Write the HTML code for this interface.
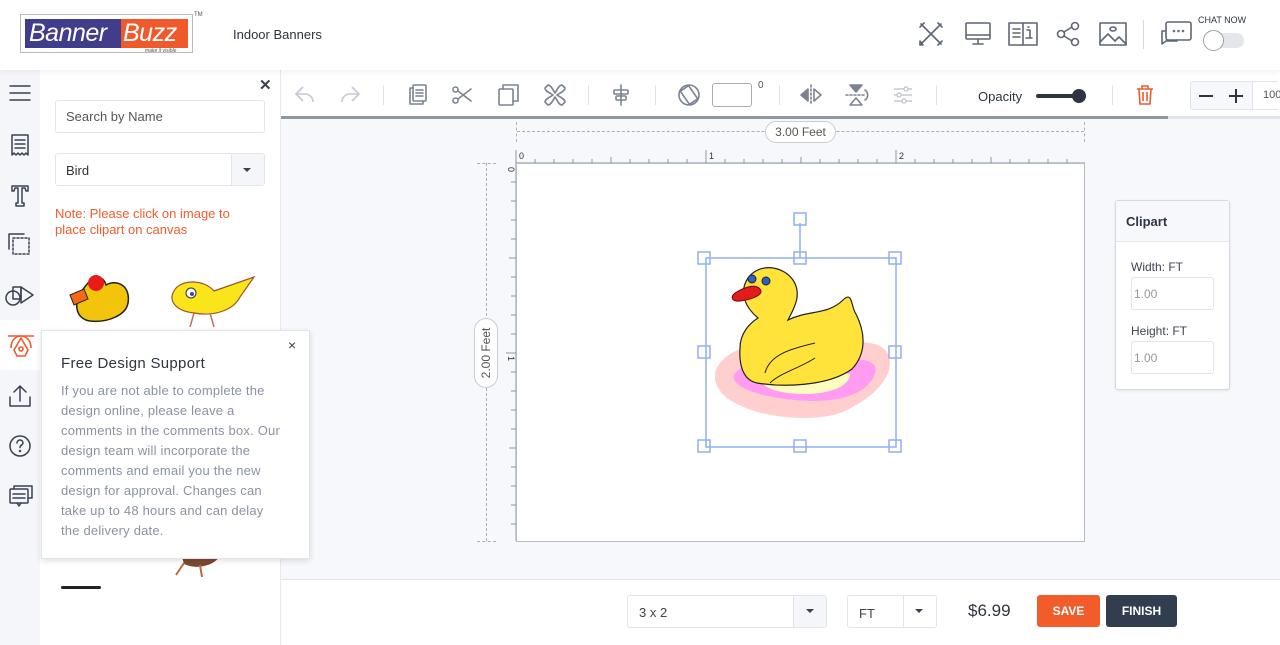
<!DOCTYPE html>
<html><head><meta charset="utf-8"><style>
*{box-sizing:border-box;margin:0;padding:0}
body{width:1280px;height:645px;overflow:hidden;font-family:"Liberation Sans",sans-serif;background:#f7f8fc;position:relative;color:#333}
.abs{position:absolute}
svg{position:absolute;overflow:visible}
.ic{fill:none;stroke:#5f6675;stroke-width:1.6;stroke-linecap:round;stroke-linejoin:round}
.tb{fill:none;stroke:#7b8392;stroke-width:1.6;stroke-linecap:round;stroke-linejoin:round}
.lr{fill:none;stroke:#3a4150;stroke-width:1.5;stroke-linecap:round;stroke-linejoin:round}
</style></head><body>
<!-- header -->
<div class="abs" style="left:0;top:0;width:1280px;height:70px;background:#fff;box-shadow:0 2px 6px rgba(0,0,0,.06);z-index:3">
  <div class="abs" style="left:20px;top:14px;width:173px;height:39px;border:1.5px solid #b9bcc3"></div>
  <div class="abs" style="left:25px;top:19px;width:96px;height:29px;background:#3f3d8c;color:#fff;font-size:25px;font-style:italic;line-height:29px;padding-left:4px;letter-spacing:-0.5px">Banner</div>
  <div class="abs" style="left:121px;top:19px;width:67px;height:29px;background:#ee5a2c;color:#fff;font-size:25px;font-style:italic;line-height:29px;padding-left:2px;letter-spacing:-0.5px">Buzz</div>
  <div class="abs" style="left:145px;top:48px;font-size:5px;color:#555;font-style:italic">make it visible</div>
  <div class="abs" style="left:194px;top:12px;font-size:6px;color:#555">TM</div>
  <div class="abs" style="left:233px;top:27px;font-size:13px;color:#2d3442">Indoor Banners</div>
  <svg style="left:918px;top:21px" width="26" height="26" class="ic"><path d="M3 3l20 20M23 3L3 23M6 2l-4 4M20 2l4 4M2 20l3 4h-3zM24 20l-4 4"/></svg>
  <svg style="left:965px;top:22px" width="26" height="24" class="ic"><rect x="1" y="1" width="24" height="16" rx="1"/><path d="M1 13h24M13 17v4M8 22h10"/></svg>
  <svg style="left:1008px;top:22px" width="30" height="24" class="ic"><rect x="1" y="1" width="28" height="22"/><path d="M15 1v22M5 7h7M5 11h7M5 15h7M19 8h3v8M18 16h6M20 5h1"/></svg>
  <svg style="left:1056px;top:22px" width="24" height="24" class="ic"><circle cx="5" cy="12" r="3.5"/><circle cx="19" cy="4" r="3.5"/><circle cx="19" cy="20" r="3.5"/><path d="M8 10l8-5M8 14l8 5"/></svg>
  <svg style="left:1099px;top:22px" width="28" height="24" class="ic"><rect x="1" y="1" width="26" height="22"/><path d="M1 20l8-8 7 7 4-4 7 7"/><ellipse cx="14" cy="7" rx="3" ry="2"/></svg>
  <div class="abs" style="left:1143px;top:20px;width:1px;height:29px;background:#d6d9df"></div>
  <svg style="left:1160px;top:21px" width="32" height="28" class="ic"><rect x="6" y="1" width="25" height="18" rx="2"/><path d="M6 10H2v13l4-3h11v-1"/><circle cx="14" cy="10" r=".5"/><circle cx="18.5" cy="10" r=".5"/><circle cx="23" cy="10" r=".5"/></svg>
  <div class="abs" style="left:1198px;top:15px;font-size:9px;color:#2d3442">CHAT NOW</div>
  <div class="abs" style="left:1204px;top:33px;width:40px;height:15px;border-radius:8px;background:#e4e6ea"></div>
  <div class="abs" style="left:1203px;top:30px;width:21px;height:21px;border-radius:50%;background:#fff;border:1px solid #9aa0ab"></div>
</div>
<!-- left rail -->
<div class="abs" style="left:0;top:70px;width:40px;height:575px;background:#f5f6fa"></div>
<svg style="left:10px;top:85px" width="20" height="16" class="lr"><path d="M0 1h20M0 8h20M0 15h20"/></svg>
<svg style="left:11px;top:134px" width="18" height="24" class="lr"><path d="M1 1h16v20l-2-2-2 2-2-2-2 2-2-2-2 2-2-2-2 2zM4 6h10M4 10h10M4 14h10"/></svg>
<svg style="left:11px;top:185px" width="18" height="22" class="lr"><path d="M1 1h16v5h-2l-1-3h-3v15h2v3H5v-3h2V3H4L3 6H1z"/></svg>
<svg style="left:8px;top:233px" width="24" height="24" class="lr"><path d="M5 5h16v16H5z" stroke-dasharray="2 2"/><path d="M1 16V1h15"/></svg>
<svg style="left:5px;top:283px" width="30" height="24" class="lr"><circle cx="8" cy="15" r="7"/><rect x="8" y="4" width="8" height="12"/><path d="M16 4l12 8-12 8z"/></svg>
<div class="abs" style="left:0;top:320px;width:40px;height:50px;background:#fff"></div>
<svg style="left:8px;top:332px" width="26" height="26" fill="none" stroke="#ee5a2c" stroke-width="1.6" stroke-linejoin="round"><path d="M0 4h26"/><path d="M3 16C3 8 8 4 13 4s10 4 10 12"/><path d="M13 6l-7 12 3 6h8l3-6z"/><circle cx="13" cy="17" r="2"/></svg>
<svg style="left:9px;top:385px" width="22" height="22" class="lr"><path d="M1 12v9h20v-9M11 16V1M5 7l6-6 6 6"/></svg>
<svg style="left:9px;top:435px" width="22" height="22" class="lr"><circle cx="11" cy="11" r="10"/><path d="M8 8a3 3 0 116 0c0 2-3 2-3 4.5"/><circle cx="11" cy="16" r=".5"/></svg>
<svg style="left:9px;top:485px" width="24" height="22" class="lr"><rect x="1" y="4" width="18" height="14" rx="1"/><path d="M5 4V1h18v12h-4M4 9h12M4 13h12M8 18l2 3 2-3"/></svg>
<!-- panel -->
<div class="abs" style="left:40px;top:70px;width:241px;height:575px;background:#fff;border-right:1px solid #e6e8ee"></div>
<div class="abs" style="left:259px;top:76px;font-size:15px;font-weight:bold;color:#3a4150">✕</div>
<div class="abs" style="left:55px;top:100px;width:210px;height:33px;border:1px solid #e1e4ea;border-radius:3px;font-size:13px;color:#555;padding:8px 10px">Search by Name</div>
<div class="abs" style="left:55px;top:153px;width:210px;height:33px;border:1px solid #e1e4ea;border-radius:3px;font-size:13px;color:#333;padding:9px 10px">Bird</div>
<div class="abs" style="left:231px;top:154px;width:33px;height:31px;background:#f5f6fa;border-left:1px solid #e1e4ea"></div>
<div class="abs" style="left:243px;top:168px;border:4px solid transparent;border-top:4px solid #3a4150;border-bottom:0"></div>
<div class="abs" style="left:55px;top:206px;font-size:13px;color:#f25c2a;line-height:16px">Note: Please click on image to<br>place clipart on canvas</div>
<!-- bird clipart approximations -->
<svg style="left:68px;top:273px" width="80" height="60"><path d="M20 10c5-8 15-8 18 2 10-6 25 0 22 18-2 12-20 20-38 18C8 46 2 30 20 10z" fill="#f2c40c" stroke="#222" stroke-width="1.5"/><circle cx="28" cy="10" r="8" fill="#e81a1a"/><path d="M2 22l14-6 4 10-14 6z" fill="#f46a14" stroke="#222"/></svg>
<svg style="left:164px;top:273px" width="100" height="60"><path d="M10 18c6-12 30-12 40 0l40-14-14 20c-6 12-24 20-46 16C12 38 4 28 10 18z" fill="#f9e51a" stroke="#a0522d" stroke-width="1.2"/><circle cx="27" cy="20" r="5" fill="#fff" stroke="#333"/><circle cx="28" cy="21" r="2" fill="#3a49a8"/><path d="M30 40l-4 14M46 40l4 14" stroke="#c0705a" stroke-width="1.5"/></svg>
<svg style="left:170px;top:545px" width="60" height="35"><path d="M10 5c10-6 30-6 40 6-6 10-24 14-36 8z" fill="#7a4a30"/><path d="M14 18l-8 12M30 20l2 12" stroke="#c06a3a" stroke-width="2"/></svg>
<div class="abs" style="left:61px;top:586px;width:40px;height:3px;background:#222;border-radius:2px"></div>
<!-- popup -->
<div class="abs" style="left:41px;top:330px;width:269px;height:229px;background:#fff;border:1px solid #e1e4ea;box-shadow:0 2px 6px rgba(0,0,0,.12);z-index:4">
  <div class="abs" style="left:246px;top:6px;font-size:14px;color:#3a4150">×</div>
  <div class="abs" style="left:19px;top:24px;font-size:15px;color:#2d3442;letter-spacing:0.3px">Free Design Support</div>
  <div class="abs" style="left:19px;top:50px;width:250px;font-size:13px;line-height:20px;color:#8a92a3;letter-spacing:0.2px;white-space:nowrap">If you are not able to complete the<br>design online, please leave a<br>comments in the comments box. Our<br>design team will incorporate the<br>comments and email you the new<br>design for approval. Changes can<br>take up to 48 hours and can delay<br>the delivery date.</div>
</div>
<!-- toolbar -->
<div class="abs" style="left:281px;top:70px;width:999px;height:46px;background:#fff"></div>
<div class="abs" style="left:281px;top:116px;width:887px;height:3px;background:#8f97a3"></div>
<div class="abs" style="left:1168px;top:116px;width:112px;height:3px;background:#dfe2e8"></div>
<svg style="left:295px;top:85px" width="20" height="20" fill="none" stroke="#c3c8d2" stroke-width="1.6"><path d="M8 2L1 9l7 7M1 9h9a8 8 0 018 8"/></svg>
<svg style="left:340px;top:85px" width="20" height="20" fill="none" stroke="#c3c8d2" stroke-width="1.6"><path d="M12 2l7 7-7 7M19 9h-9a8 8 0 00-8 8"/></svg>
<div class="abs" style="left:383px;top:85px;width:1px;height:20px;background:#dfe2e8"></div>
<svg style="left:408px;top:84px" width="20" height="22" class="tb"><rect x="5" y="1" width="13" height="16" rx="1"/><path d="M5 4H2v16h13v-3M8 6h7M8 9h7M8 12h7"/></svg>
<svg style="left:452px;top:86px" width="20" height="18" class="tb"><circle cx="3.5" cy="3.5" r="2.5"/><circle cx="3.5" cy="14.5" r="2.5"/><path d="M6 5l13 10M6 13L19 3"/></svg>
<svg style="left:498px;top:84px" width="22" height="22" class="tb"><rect x="1" y="5" width="14" height="16" rx="1"/><path d="M5 5V1h15v16h-5"/></svg>
<svg style="left:544px;top:84px" width="22" height="22" class="tb"><path d="M4 1c3 0 5 5 7 8 2-3 4-8 7-8l3 3c0 3-5 5-8 7 3 2 8 4 8 7l-3 3c-3 0-5-5-7-8-2 3-4 8-7 8l-3-3c0-3 5-5 8-7C6 9 1 7 1 4z"/></svg>
<div class="abs" style="left:588px;top:85px;width:1px;height:20px;background:#dfe2e8"></div>
<svg style="left:612px;top:84px" width="18" height="22" class="tb"><path d="M9 1v20"/><rect x="2" y="6" width="14" height="4" rx="1"/><rect x="4" y="12" width="10" height="4" rx="1"/></svg>
<div class="abs" style="left:655px;top:85px;width:1px;height:20px;background:#dfe2e8"></div>
<svg style="left:678px;top:84px" width="22" height="22" class="tb"><circle cx="11" cy="11" r="10"/><rect x="6" y="3" width="10" height="16" transform="rotate(-35 11 11)"/></svg>
<div class="abs" style="left:712px;top:83px;width:40px;height:24px;border:1px solid #a7aeb9;border-radius:3px"></div>
<div class="abs" style="left:758px;top:80px;font-size:10px;color:#555">0</div>
<div class="abs" style="left:779px;top:85px;width:1px;height:20px;background:#dfe2e8"></div>
<svg style="left:800px;top:84px" width="22" height="22" class="tb"><path d="M11 1v20" stroke-dasharray="2 2"/><path d="M8 5L1 11l7 6z" fill="#7b8392"/><path d="M14 5l7 6-7 6z"/></svg>
<svg style="left:845px;top:84px" width="24" height="22" class="tb"><path d="M1 11h20" stroke-dasharray="2 2"/><path d="M5 1h12l-6 7z" fill="#7b8392"/><path d="M5 21h12l-6-7z"/><path d="M20 6a6 6 0 010 10"/></svg>
<svg style="left:893px;top:85px" width="20" height="20" fill="none" stroke="#c3c8d2" stroke-width="1.4"><path d="M1 4h18M1 10h18M1 16h18"/><circle cx="13" cy="4" r="2" fill="#fff"/><circle cx="6" cy="10" r="2" fill="#fff"/><circle cx="11" cy="16" r="2" fill="#fff"/></svg>
<div class="abs" style="left:936px;top:85px;width:1px;height:20px;background:#dfe2e8"></div>
<div class="abs" style="left:978px;top:89px;font-size:13px;color:#2d3442">Opacity</div>
<div class="abs" style="left:1036px;top:94px;width:44px;height:4px;background:#2d3442;border-radius:2px"></div>
<div class="abs" style="left:1072px;top:89px;width:14px;height:14px;background:#2d3442;border-radius:50%"></div>
<div class="abs" style="left:1112px;top:85px;width:1px;height:20px;background:#dfe2e8"></div>
<svg style="left:1136px;top:85px" width="18" height="20" fill="none" stroke="#ee5a2c" stroke-width="1.6"><path d="M1 4h16M6 4V1h6v3M3 4l1 15h10l1-15M7 7v9M11 7v9"/></svg>
<div class="abs" style="left:1190px;top:81px;width:90px;height:29px;border:1px solid #e1e4ea;border-radius:3px;background:#f7f8fc"></div>
<div class="abs" style="left:1199px;top:83px;width:14px;height:2px;background:#2d3442;top:95px"></div>
<div class="abs" style="left:1229px;top:95px;width:14px;height:2px;background:#2d3442"></div>
<div class="abs" style="left:1235px;top:89px;width:2px;height:14px;background:#2d3442"></div>
<div class="abs" style="left:1252px;top:82px;width:28px;height:27px;background:#fff;border-left:1px solid #e1e4ea;font-size:11px;color:#555;padding:7px 0 0 10px">100</div>
<!-- rulers / dims -->
<div class="abs" style="left:517px;top:131px;width:567px;border-top:1px dashed #aab0ba"></div>
<div class="abs" style="left:516px;top:122px;height:20px;border-left:1px dashed #aab0ba"></div>
<div class="abs" style="left:1084px;top:122px;height:20px;border-left:1px dashed #aab0ba"></div>
<div class="abs" style="left:765px;top:121px;width:71px;height:22px;border:1px solid #c8ccd4;border-radius:11px;background:#fff;font-size:12px;color:#555;text-align:center;line-height:20px">3.00 Feet</div>
<div class="abs" style="left:486px;top:163px;height:378px;border-left:1px dashed #aab0ba"></div>
<div class="abs" style="left:477px;top:163px;width:19px;border-top:1px dashed #aab0ba"></div>
<div class="abs" style="left:477px;top:541px;width:19px;border-top:1px dashed #aab0ba"></div>
<div class="abs" style="left:474px;top:318px;width:24px;height:70px;border:1px solid #c8ccd4;border-radius:12px;background:#fff"></div>
<div class="abs" style="left:486px;top:353px;transform:translate(-50%,-50%) rotate(-90deg);font-size:12px;color:#555;white-space:nowrap">2.00 Feet</div>
<svg style="left:505px;top:145px" width="590" height="400">
  <g stroke="#8f97a3" stroke-width="1">
    <path d="M11 18H580M11 18V396"/>
    <path d="M11 5v13M201 5v13M391 5v13M30 14v4M49 14v4M68 14v4M87 14v4M106 12v6M125 14v4M144 14v4M163 14v4M182 14v4M220 14v4M239 14v4M258 14v4M277 14v4M296 12v6M315 14v4M334 14v4M353 14v4M372 14v4M410 14v4M429 14v4M448 14v4M467 14v4M486 12v6M505 14v4M524 14v4M543 14v4M562 14v4"/>
    <path d="M6 37h5M6 56h5M6 75h5M6 94h5M4 113h7M6 132h5M6 151h5M6 170h5M6 189h5M1 208h10M6 227h5M6 246h5M6 265h5M6 284h5M4 303h7M6 322h5M6 341h5M6 360h5M6 379h5"/>
  </g>
  <text x="14" y="14" font-size="9" fill="#333" font-family="Liberation Sans">0</text>
  <text x="204" y="14" font-size="9" fill="#333" font-family="Liberation Sans">1</text>
  <text x="394" y="14" font-size="9" fill="#333" font-family="Liberation Sans">2</text>
  <text x="0" y="0" font-size="9" fill="#333" font-family="Liberation Sans" transform="translate(3,22) rotate(90)">0</text>
  <text x="0" y="0" font-size="9" fill="#333" font-family="Liberation Sans" transform="translate(3,211) rotate(90)">1</text>
</svg>
<!-- canvas -->
<div class="abs" style="left:516px;top:163px;width:569px;height:379px;background:#fff;border:1px solid #b5bac3"></div>
<svg style="left:690px;top:205px" width="220" height="255">
  <g transform="translate(0,8)">
  <path d="M30 150c20-25 70-20 100-20s70-8 70 20c0 20-25 40-50 50-30 10-80 4-105-10-20-10-25-28-15-40z" fill="#ffcfd0"/>
  <path d="M45 160c20-20 60-15 90-15 30 0 55 0 50 15-5 18-30 28-60 28-40 0-90-12-80-28z" fill="#ff9cf2"/>
  <path d="M70 165c20-8 60-8 90-4 0 12-20 20-45 20-25 0-45-6-45-16z" fill="#fffcc0"/>
  </g>
  <g transform="translate(0,38)">
  <path d="M50 105c0-15 10-25 18-30-12-10-20-25-10-40 12-16 35-12 45 2 10 15 0 30-5 40 20-10 40-5 55-20 10-10 8 8 13 14 10 20 10 40-4 55-25 18-70 18-95 14-15-3-18-20-17-35z" fill="#ffe23a" stroke="#222" stroke-width="1.2"/>
  <path d="M45 50c8-5 20-10 25-4 4 5-5 10-20 12-8 1-10-4-5-8z" fill="#e21c1c" stroke="#7a0000"/>
  <circle cx="62" cy="36" r="4" fill="#2a63c8" stroke="#222"/>
  <circle cx="76" cy="38" r="4" fill="#2a63c8" stroke="#222"/>
  <path d="M75 130c5-20 30-25 50-30M80 140c10-10 30-15 45-25" fill="none" stroke="#222"/>
  </g>
  <g fill="none" stroke="#8fb0f5" stroke-width="1.5">
    <rect x="16" y="53" width="190" height="189"/>
    <path d="M110 53V18"/>
    <rect x="104" y="8" width="12" height="12"/>
    <rect x="8" y="47" width="12" height="12"/><rect x="104" y="47" width="12" height="12"/><rect x="199" y="47" width="12" height="12"/>
    <rect x="8" y="141" width="12" height="12"/><rect x="199" y="141" width="12" height="12"/>
    <rect x="8" y="235" width="12" height="12"/><rect x="104" y="235" width="12" height="12"/><rect x="199" y="235" width="12" height="12"/>
  </g>
</svg>
<!-- clipart panel -->
<div class="abs" style="left:1115px;top:200px;width:115px;height:190px;background:#fff;border:1px solid #d6d9e0;border-radius:3px;box-shadow:0 1px 3px rgba(0,0,0,.08)">
  <div style="height:41px;background:#f7f8fc;border-bottom:1px solid #e6e8ee;font-size:13px;font-weight:bold;color:#2d3442;padding:13px 10px">Clipart</div>
  <div class="abs" style="left:15px;top:59px;font-size:12px;color:#3d4452">Width: FT</div>
  <div class="abs" style="left:15px;top:76px;width:83px;height:33px;border:1px solid #e1e4ea;border-radius:3px;font-size:12px;color:#999;padding:9px 2px">1.00</div>
  <div class="abs" style="left:15px;top:123px;font-size:12px;color:#3d4452">Height: FT</div>
  <div class="abs" style="left:15px;top:140px;width:83px;height:33px;border:1px solid #e1e4ea;border-radius:3px;font-size:12px;color:#999;padding:9px 2px">1.00</div>
</div>
<!-- bottom bar -->
<div class="abs" style="left:281px;top:579px;width:999px;height:66px;background:#fff;border-top:1px solid #dfe2e8"></div>
<div class="abs" style="left:627px;top:595px;width:200px;height:33px;border:1px solid #e1e4ea;border-radius:3px;font-size:13px;color:#444;padding:9px 11px">3 x 2</div>
<div class="abs" style="left:793px;top:596px;width:33px;height:31px;background:#f5f6fa;border-left:1px solid #e1e4ea"></div>
<div class="abs" style="left:806px;top:609px;border:4px solid transparent;border-top:4px solid #3a4150;border-bottom:0"></div>
<div class="abs" style="left:847px;top:595px;width:90px;height:33px;border:1px solid #e1e4ea;border-radius:3px;font-size:13px;color:#444;padding:10px 11px">FT</div>
<div class="abs" style="left:903px;top:596px;width:33px;height:31px;background:#fff;border-left:1px solid #e1e4ea"></div>
<div class="abs" style="left:915px;top:609px;border:4px solid transparent;border-top:4px solid #3a4150;border-bottom:0"></div>
<div class="abs" style="left:968px;top:601px;font-size:17px;color:#2d3442">$6.99</div>
<div class="abs" style="left:1037px;top:595px;width:63px;height:32px;background:#f25c2a;border-radius:3px;color:#fff;font-size:12px;font-weight:bold;text-align:center;line-height:32px">SAVE</div>
<div class="abs" style="left:1106px;top:595px;width:71px;height:32px;background:#323d4f;border-radius:3px;color:#fff;font-size:12px;font-weight:bold;text-align:center;line-height:32px">FINISH</div>
</body></html>
